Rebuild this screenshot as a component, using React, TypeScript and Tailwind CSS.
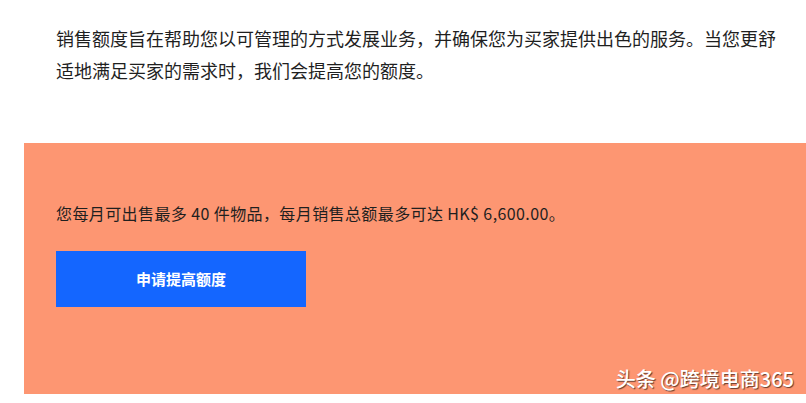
export default function App() {
  return (
    <div
      className="w-[806px] h-[403px] bg-white overflow-hidden text-[#1f1f1f]"
      style={{ fontFamily: '"Noto Sans CJK SC", "Noto Sans", sans-serif' }}
    >
      <div className="pl-[56px] pt-[22px] h-[143px]">
        <p className="w-[735px] text-[18px] leading-[32px]">
          销售额度旨在帮助您以可管理的方式发展业务，并确保您为买家提供出色的服务。当您更舒适地满足买家的需求时，我们会提高您的额度。
        </p>
      </div>
      <div className="ml-[24px] h-[251px] bg-[#fd9672] pl-[32px] pt-[58px] flex flex-col">
        <p className="text-[16px] leading-[24px] tracking-[0.4px]">
          您每月可出售最多 40 件物品，每月销售总额最多可达 HK$ 6,600.00。
        </p>
        <button className="mt-[26px] w-[250px] h-[56px] bg-[#1466ff] text-white text-[15px] font-bold flex items-center justify-center">
          申请提高额度
        </button>
        <div className="mt-auto mb-[1px] self-end pr-[12px] text-white text-[20px] leading-[28px] font-medium [text-shadow:1px_1px_1px_rgba(0,0,0,0.6)]">
          头条 @跨境电商365
        </div>
      </div>
    </div>
  );
}
